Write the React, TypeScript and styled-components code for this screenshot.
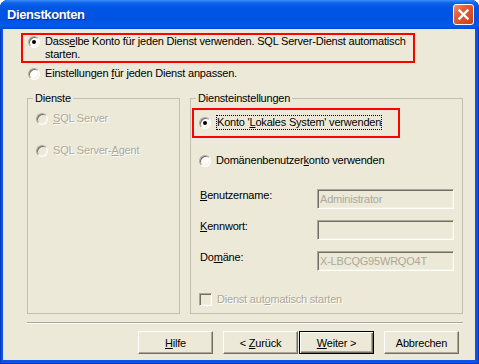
import React from "react";
import styled, { createGlobalStyle } from "styled-components";

const GlobalStyle = createGlobalStyle`
  html, body {
    margin: 0;
    padding: 0;
    background: #ffffff;
    overflow: hidden;
  }
  body {
    font-family: "Liberation Sans", Arial, sans-serif;
    font-size: 11px;
    color: #000000;
  }
`;

const Window = styled.div`
  width: 479px;
  height: 364px;
  display: flex;
  flex-direction: column;
  background: #0a52e8;
  border-radius: 8px 8px 0 0;
  box-shadow: inset 0 0 0 1px #0838c0;
  overflow: hidden;
`;

const TitleBar = styled.div`
  flex: none;
  height: 29px;
  display: flex;
  align-items: center;
  justify-content: space-between;
  padding: 0 5px 0 7px;
  background: linear-gradient(
    to bottom,
    #3d8ef8 0px,
    #2b80f6 1px,
    #0d62ea 3px,
    #0055e5 8px,
    #0053e2 20px,
    #005aec 26px,
    #0049d8 29px
  );
`;

const Title = styled.span`
  font-weight: bold;
  font-size: 13px;
  letter-spacing: -0.4px;
  color: #ffffff;
  text-shadow: 1px 1px 0 #0a2a8c;
`;

const CloseButton = styled.div`
  width: 21px;
  height: 21px;
  box-sizing: border-box;
  border: 1px solid #ffffff;
  border-radius: 3px;
  background: linear-gradient(135deg, #f2906c 0%, #e35d36 35%, #c93e18 100%);
  display: flex;
  align-items: center;
  justify-content: center;
`;

const Body = styled.div`
  flex: 1;
  margin: 0 4px 4px 3px;
  padding: 4px 12px 6px 18px;
  background: #ece9d8;
  display: flex;
  flex-direction: column;
  letter-spacing: -0.2px;
`;

const Highlight = styled.div<{ $width: number }>`
  box-sizing: border-box;
  width: ${p => p.$width}px;
  border: 2px solid #ff0000;
`;

const MainChoice = styled(Highlight)`
  padding: 0 5px;
`;

const FocusChoice = styled(Highlight)`
  margin-left: -7px;
  padding: 6px 0 6px 5px;
`;

const OptionRow = styled.label<{ $indent?: number; $top?: number }>`
  display: flex;
  align-items: flex-start;
  gap: 5px;
  margin-left: ${p => p.$indent ?? 0}px;
  margin-top: ${p => p.$top ?? 0}px;
  line-height: 13px;
`;

const RadioMark = styled.span<{ $checked?: boolean; $disabled?: boolean }>`
  position: relative;
  flex: none;
  box-sizing: border-box;
  width: 12px;
  height: 12px;
  margin-top: 1px;
  border-radius: 50%;
  border: 1px solid;
  border-color: #aca899 #ffffff #ffffff #aca899;
  box-shadow: inset 1px 1px 0 #716f64, inset -1px -1px 0 #f1efe2;
  background: ${p => (p.$disabled ? "#ece9d8" : "#ffffff")};

  &::after {
    content: "";
    display: ${p => (p.$checked ? "block" : "none")};
    position: absolute;
    left: 3px;
    top: 3px;
    width: 4px;
    height: 4px;
    border-radius: 50%;
    background: #000000;
  }
`;

const CheckMark = styled.span`
  flex: none;
  box-sizing: border-box;
  width: 13px;
  height: 13px;
  border: 1px solid;
  border-color: #aca899 #ffffff #ffffff #aca899;
  box-shadow: inset 1px 1px 0 #716f64, inset -1px -1px 0 #f1efe2;
  background: #ece9d8;
`;

const Caption = styled.span<{ $disabled?: boolean }>`
  color: ${p => (p.$disabled ? "#aca899" : "#000000")};
  text-shadow: ${p => (p.$disabled ? "1px 1px 0 #ffffff" : "none")};
`;

const FocusText = styled.span`
  margin-top: -1px;
  border: 1px dotted #000000;
`;

const Key = styled.span`
  text-decoration: underline;
`;

const GroupRow = styled.div`
  flex: 1;
  display: flex;
  gap: 10px;
  margin: 12px 0 0 6px;
`;

const Group = styled.fieldset<{ $width?: number; $top: number }>`
  margin: 0;
  min-width: 0;
  box-sizing: border-box;
  ${p => (p.$width ? `width: ${p.$width}px; flex: none;` : "flex: 1;")}
  border: 1px solid #c2bfae;
  border-radius: 0;
  padding: ${p => p.$top}px 8px 0 8px;
  display: flex;
  flex-direction: column;
`;

const Legend = styled.legend`
  margin-left: -3px;
  padding: 0 2px;
  line-height: 13px;
`;

const FieldRow = styled.div<{ $top: number }>`
  display: flex;
  align-items: flex-start;
  margin-top: ${p => p.$top}px;
  height: 20px;
`;

const FieldLabel = styled.span`
  width: 117px;
  padding-left: 1px;
  line-height: 13px;
`;

const TextBox = styled.div`
  box-sizing: border-box;
  width: 137px;
  height: 20px;
  padding: 3px 2px 0 2px;
  border: 1px solid;
  border-color: #aca899 #ffffff #ffffff #aca899;
  box-shadow: inset 1px 1px 0 #716f64, inset -1px -1px 0 #f1efe2;
  background: #ece9d8;
  color: #aca899;
  line-height: 13px;
  white-space: nowrap;
  overflow: hidden;
`;

const Separator = styled.div`
  height: 0;
  margin: 8px 0 0 6px;
  border-top: 1px solid #aca899;
  border-bottom: 1px solid #ffffff;
`;

const ButtonRow = styled.div`
  display: flex;
  justify-content: flex-end;
  margin-top: 7px;
  padding-right: 4px;
`;

const Button = styled.div<{ $default?: boolean; $gap?: number }>`
  box-sizing: border-box;
  width: 75px;
  height: 23px;
  margin-left: ${p => p.$gap ?? 0}px;
  display: flex;
  align-items: center;
  justify-content: center;
  background: #ece9d8;
  border: 1px solid;
  border-color: ${p =>
    p.$default ? "#000000" : "#ffffff #716f64 #716f64 #ffffff"};
  box-shadow: ${p =>
    p.$default
      ? "inset 1px 1px 0 #ffffff, inset -1px -1px 0 #716f64, inset -2px -2px 0 #aca899"
      : "inset -1px -1px 0 #aca899"};
`;

const ButtonText = styled.span`
  white-space: pre;
`;

const CloseIcon = () => (
  <svg width="13" height="13" viewBox="0 0 13 13">
    <path
      d="M2.5 2.5 L10.5 10.5 M10.5 2.5 L2.5 10.5"
      stroke="#ffffff"
      strokeWidth="2.4"
      strokeLinecap="square"
      fill="none"
    />
  </svg>
);

export default function App() {
  return (
    <>
      <GlobalStyle />
      <Window>
        <TitleBar>
          <Title>Dienstkonten</Title>
          <CloseButton>
            <CloseIcon />
          </CloseButton>
        </TitleBar>
        <Body>
          <MainChoice $width={394}>
            <OptionRow>
              <RadioMark $checked />
              <Caption>
                Dass<Key>e</Key>lbe Konto für jeden Dienst verwenden. SQL
                Server-Dienst automatisch starten.
              </Caption>
            </OptionRow>
          </MainChoice>
          <OptionRow $indent={7} $top={4}>
            <RadioMark />
            <Caption>
              Einstellungen <Key>f</Key>ür jeden Dienst anpassen.
            </Caption>
          </OptionRow>

          <GroupRow>
            <Group $width={153} $top={7}>
              <Legend>Dienste</Legend>
              <OptionRow>
                <RadioMark $disabled />
                <Caption $disabled>
                  <Key>S</Key>QL Server
                </Caption>
              </OptionRow>
              <OptionRow $top={19}>
                <RadioMark $disabled />
                <Caption $disabled>
                  SQL Server-<Key>A</Key>gent
                </Caption>
              </OptionRow>
            </Group>

            <Group $top={3}>
              <Legend>Diensteinstellungen</Legend>
              <FocusChoice $width={208}>
                <OptionRow>
                  <RadioMark $checked />
                  <FocusText>
                    Konto '<Key>L</Key>okales System' verwenden
                  </FocusText>
                </OptionRow>
              </FocusChoice>
              <OptionRow $top={16}>
                <RadioMark />
                <Caption>
                  Domänenbenutzer<Key>k</Key>onto verwenden
                </Caption>
              </OptionRow>

              <FieldRow $top={22}>
                <FieldLabel>
                  <Key>B</Key>enutzername:
                </FieldLabel>
                <TextBox>Administrator</TextBox>
              </FieldRow>
              <FieldRow $top={11}>
                <FieldLabel>
                  <Key>K</Key>ennwort:
                </FieldLabel>
                <TextBox />
              </FieldRow>
              <FieldRow $top={11}>
                <FieldLabel>
                  Do<Key>m</Key>äne:
                </FieldLabel>
                <TextBox>X-LBCQG95WRQO4T</TextBox>
              </FieldRow>

              <OptionRow $top={22}>
                <CheckMark />
                <Caption $disabled>
                  Dienst aut<Key>o</Key>matisch starten
                </Caption>
              </OptionRow>
            </Group>
          </GroupRow>

          <Separator />
          <ButtonRow>
            <Button>
              <ButtonText>
                <Key>H</Key>ilfe
              </ButtonText>
            </Button>
            <Button $gap={10}>
              <ButtonText>
                {"< "}
                <Key>Z</Key>urück
              </ButtonText>
            </Button>
            <Button $gap={1} $default>
              <ButtonText>
                <Key>W</Key>
                {"eiter >"}
              </ButtonText>
            </Button>
            <Button $gap={10}>
              <ButtonText>Abbrechen</ButtonText>
            </Button>
          </ButtonRow>
        </Body>
      </Window>
    </>
  );
}
